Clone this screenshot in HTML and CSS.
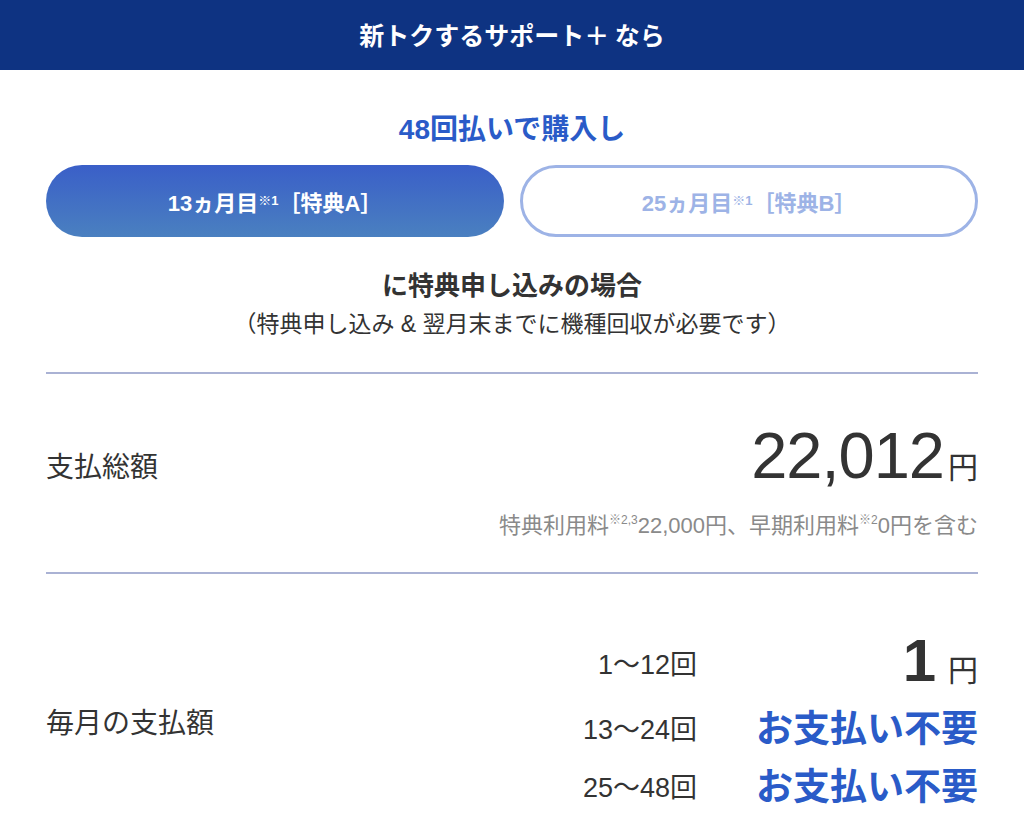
FILE: index.html
```html
<!DOCTYPE html>
<html lang="ja">
<head>
<meta charset="utf-8">
<link rel="stylesheet" href="styles.css">
</head>
<body>
<header class="hero">新トクするサポート＋ なら</header>
<main class="content">
  <p class="lead">48回払いで購入し</p>
  <div class="tabs">
    <div class="tab tab-active">13ヵ月目<sup>※1</sup>［特典A］</div>
    <div class="tab tab-inactive">25ヵ月目<sup>※1</sup>［特典B］</div>
  </div>
  <p class="case">に特典申し込みの場合</p>
  <p class="cond">（特典申し込み &amp; 翌月末までに機種回収が必要です）</p>
  <section class="row total">
    <div class="label">支払総額</div>
    <div class="total-right">
      <div class="price"><span class="num">22,012</span><span class="yen">円</span></div>
      <div class="note">特典利用料<sup>※2,3</sup>22,000円、早期利用料<sup>※2</sup>0円を含む</div>
    </div>
  </section>
  <section class="row monthly">
    <div class="label">毎月の支払額</div>
    <div class="plan">
      <div class="range first">1〜12回</div>
      <div class="val first"><span class="num-s">1</span><span class="yen">円</span></div>
      <div class="range">13〜24回</div>
      <div class="val free">お支払い不要</div>
      <div class="range">25〜48回</div>
      <div class="val free">お支払い不要</div>
    </div>
  </section>
</main>
</body>
</html>
```
FILE: styles.css
```css
html, body {
  margin: 0;
  padding: 0;
  background: #fff;
}
body {
  font-family: "Liberation Sans", "Noto Sans CJK JP", sans-serif;
  color: #333;
}
.hero {
  height: 70px;
  background: #0e3382;
  color: #fff;
  font-family: "Noto Sans CJK JP", sans-serif;
  font-weight: 700;
  font-size: 25px;
  display: flex;
  align-items: center;
  justify-content: center;
  padding-bottom: 2px;
  box-sizing: border-box;
}
.content {
  padding: 0 46px;
}
.lead {
  margin: 44px 0 0;
  text-align: center;
  color: #2a5bc8;
  font-size: 28px;
  font-weight: 700;
  line-height: 32px;
}
.tabs {
  display: grid;
  grid-template-columns: 1fr 1fr;
  gap: 16px;
  margin-top: 19px;
}
.tab {
  height: 72px;
  border-radius: 36px;
  display: flex;
  align-items: center;
  justify-content: center;
  font-size: 22px;
  font-weight: 700;
  box-sizing: border-box;
}
.tab sup {
  font-size: 13px;
  vertical-align: 10px;
  line-height: 0;
}
.tab-active {
  background: linear-gradient(#3a5fc8, #4a80c0);
  color: #fff;
}
.tab-inactive {
  background: #fff;
  border: 3px solid #9db3e6;
  color: #9db3e6;
}
.case {
  margin: 33px 0 0;
  text-align: center;
  font-size: 26px;
  font-weight: 700;
  line-height: 32px;
}
.cond {
  margin: 6px 0 0;
  text-align: center;
  font-size: 23px;
  line-height: 32px;
}
.row {
  border-top: 2px solid #aab2d4;
  display: flex;
  justify-content: space-between;
}
.label {
  font-size: 28px;
  line-height: 36px;
}
.total {
  margin-top: 32px;
  padding: 47px 0 32px;
}
.total .label {
  margin-top: 29px;
}
.total-right {
  display: flex;
  flex-direction: column;
  align-items: flex-end;
}
.price {
  display: flex;
  align-items: baseline;
  line-height: 70px;
}
.num {
  font-size: 65px;
  letter-spacing: -1px;
}
.yen {
  font-family: "Noto Sans CJK JP", sans-serif;
  font-size: 30px;
  margin-left: 4px;
}
.note {
  margin-top: 12px;
  font-size: 22px;
  color: #8a8a8a;
  line-height: 28px;
}
.note sup {
  font-size: 12px;
  vertical-align: 9px;
  line-height: 0;
}
.monthly {
  padding: 54px 0 20px;
  align-items: center;
}
.monthly .label {
  margin-top: 2px;
}
.plan {
  display: grid;
  grid-template-columns: auto 281px;
  align-items: center;
}
.range {
  text-align: right;
  font-size: 27px;
  line-height: 58px;
}
.range.first, .val.first {
  line-height: 66px;
}
.val {
  display: flex;
  justify-content: flex-end;
  align-items: baseline;
}
.num-s {
  font-size: 60px;
  font-weight: 700;
  line-height: 66px;
}
.val .yen {
  margin-left: 12px;
}
.free {
  color: #2a5bc8;
  font-size: 37px;
  font-weight: 700;
  line-height: 58px;
}
```
